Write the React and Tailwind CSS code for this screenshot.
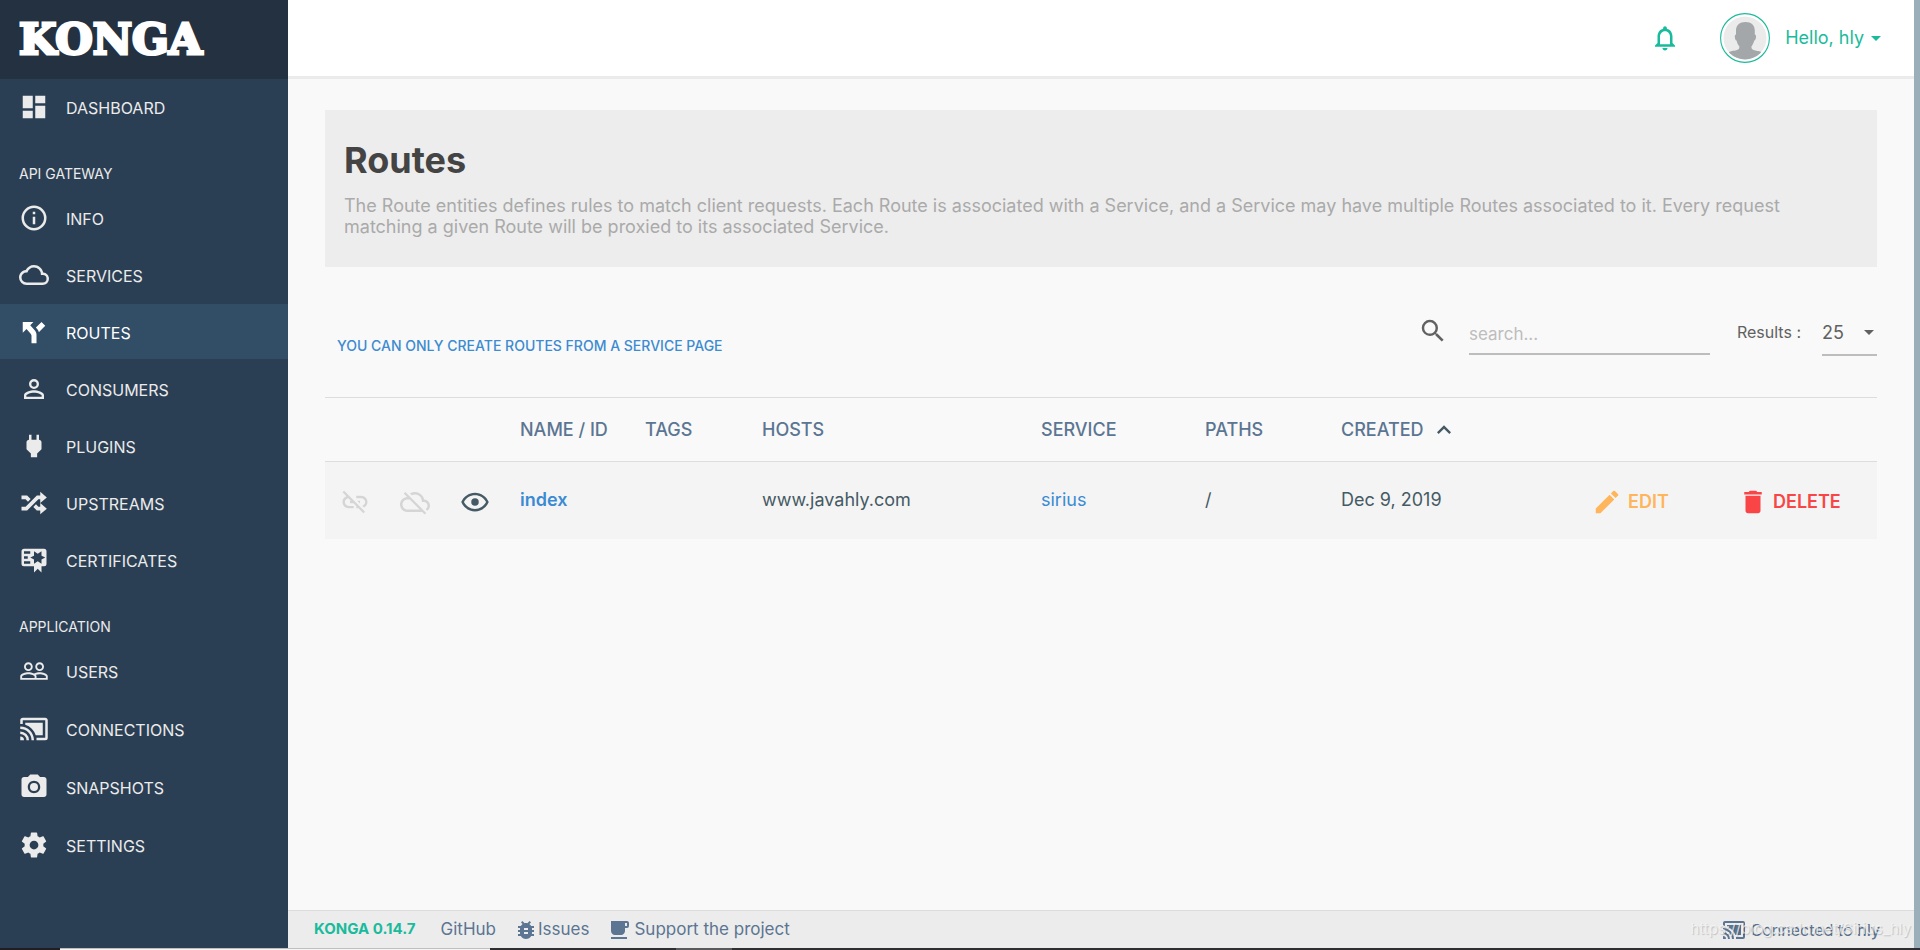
import React from "react";
import {
  MdPeopleOutline,
  MdPhotoCamera,
  MdNotificationsNone,
  MdLinkOff,
  MdCloudOff,
  MdEdit,
  MdDelete,
  MdBugReport,
  MdLocalCafe,
  MdSearch,
  MdKeyboardArrowUp,
  MdArrowDropDown,
} from "react-icons/md";

function Glyph({ d, className = "size-[30px]" }) {
  return (
    <svg viewBox="0 0 24 24" fill="currentColor" className={className} aria-hidden="true">
      <path d={d} />
    </svg>
  );
}

const castPath =
  "M21,3H3C1.89,3 1,3.89 1,5V8H3V5H21V19H14V21H21A2,2 0 0,0 23,19V5C23,3.89 22.1,3 21,3M1,10V12A9,9 0 0,1 10,21H12C12,14.92 7.07,10 1,10M19,7H5V8.63C8.96,9.91 12.09,13.04 13.37,17H19M1,14V16A5,5 0 0,1 6,21H8A7,7 0 0,0 1,14M1,18V21H4A3,3 0 0,0 1,18Z";
const eyePath =
  "M12,9A3,3 0 0,1 15,12A3,3 0 0,1 12,15A3,3 0 0,1 9,12A3,3 0 0,1 12,9M12,4.5C17,4.5 21.27,7.61 23,12C21.27,16.39 17,19.5 12,19.5C7,19.5 2.73,16.39 1,12C2.73,7.61 7,4.5 12,4.5M3.18,12C4.83,15.36 8.24,17.5 12,17.5C15.76,17.5 19.17,15.36 20.82,12C19.17,8.64 15.76,6.5 12,6.5C8.24,6.5 4.83,8.64 3.18,12Z";

const gateway = [
  ["INFO", "M11,9H13V7H11M12,20C7.59,20 4,16.41 4,12C4,7.59 7.59,4 12,4C16.41,4 20,7.59 20,12C20,16.41 16.41,20 12,20M12,2A10,10 0 0,0 2,12A10,10 0 0,0 12,22A10,10 0 0,0 22,12A10,10 0 0,0 12,2M11,17H13V11H11V17Z"],
  ["SERVICES", "M19,18H6A4,4 0 0,1 2,14A4,4 0 0,1 6,10H6.71C7.37,7.69 9.5,6 12,6A5.5,5.5 0 0,1 17.5,11.5V12H19A3,3 0 0,1 22,15A3,3 0 0,1 19,18M19.35,10.03C18.67,6.59 15.64,4 12,4C9.11,4 6.6,5.64 5.35,8.03C2.34,8.36 0,10.9 0,14A6,6 0 0,0 6,20H19A5,5 0 0,0 24,15C24,12.36 21.95,10.22 19.35,10.03Z"],
  ["ROUTES", "M3,4V12.5L6,9.5L9,13C10,14 10,15 10,15V21H14V14C14,14 14,13 13.47,12C12.94,11 12,10 12,10L9,6.58L11.5,4M18,4L13.54,8.47L14,9C14,9 14.93,10 15.47,11C15.68,11.4 15.8,11.79 15.87,12.13L21,7"],
  ["CONSUMERS", "M12,13C9.33,13 4,14.33 4,17V20H20V17C20,14.33 14.67,13 12,13M12,4A4,4 0 0,0 8,8A4,4 0 0,0 12,12A4,4 0 0,0 16,8A4,4 0 0,0 12,4M12,14.9C14.97,14.9 18.1,16.36 18.1,17V18.1H5.9V17C5.9,16.36 9,14.9 12,14.9M12,5.9A2.1,2.1 0 0,1 14.1,8A2.1,2.1 0 0,1 12,10.1A2.1,2.1 0 0,1 9.9,8A2.1,2.1 0 0,1 12,5.9Z"],
  ["PLUGINS", "M16,7V3H14V7H10V3H8V7H8C7,7 6,8 6,9V14.5L9.5,18V21H14.5V18L18,14.5V9C18,8 17,7 16,7Z"],
  ["UPSTREAMS", "M17,3L22.25,7.5L17,12L22.25,16.5L17,21V18H14.26L11.44,15.18L13.56,13.06L15.5,15H17V12L17,9H15.5L6.5,18H2V15H5.26L14.26,6H17V3M2,6H6.5L9.32,8.82L7.2,10.94L5.26,9H2V6Z"],
  ["CERTIFICATES", "M4,3C2.89,3 2,3.89 2,5V15A2,2 0 0,0 4,17H12V22L15,19L18,22V17H20A2,2 0 0,0 22,15V8L22,6V5A2,2 0 0,0 20,3H16V3H4M12,5L15,7L18,5V8.5L21,10L18,11.5V15L15,13L12,15V11.5L9,10L12,8.5V5M4,5H9V7H4V5M4,9H7V11H4V9M4,13H9V15H4V13Z"],
];

function NavItem({ label, active, children }) {
  return (
    <li>
      <a
        href="#"
        aria-current={active ? "page" : undefined}
        className={
          active
            ? "flex h-[55px] items-center gap-[17px] bg-[#324d66] px-[19px] text-white"
            : "flex h-[55px] items-center gap-[17px] px-[19px] text-[#ebebeb]"
        }
      >
        {children}
        <span className="pt-[3px] text-base">{label}</span>
      </a>
    </li>
  );
}

function NavHeading({ children }) {
  return (
    <h2 className="px-[19px] pt-[30px] pb-[6px] text-sm leading-5 text-[#ebebeb]">{children}</h2>
  );
}

function Sidebar() {
  return (
    <aside className="w-[288px] shrink-0 bg-[#2b3f54]">
      <div className="flex h-[79px] items-center bg-[#233140] px-[19px]">
        <a
          href="#"
          className="font-['DejaVu_Serif',serif] text-[43px] leading-none font-bold text-white [-webkit-text-stroke:3px_white]"
        >
          KONGA
        </a>
      </div>
      <nav>
        <ul>
          <NavItem label="DASHBOARD">
            <Glyph d="M13,3V9H21V3M13,21H21V11H13M3,21H11V15H3M3,13H11V3H3V13Z" />
          </NavItem>
        </ul>
        <NavHeading>API GATEWAY</NavHeading>
        <ul className="flex flex-col gap-[2px]">
          {gateway.map(([label, d]) => (
            <NavItem key={label} label={label} active={label === "ROUTES"}>
              <Glyph d={d} />
            </NavItem>
          ))}
        </ul>
        <NavHeading>APPLICATION</NavHeading>
        <ul className="flex flex-col gap-[3px]">
          <NavItem label="USERS">
            <MdPeopleOutline className="size-[30px]" />
          </NavItem>
          <NavItem label="CONNECTIONS">
            <Glyph d={castPath} />
          </NavItem>
          <NavItem label="SNAPSHOTS">
            <MdPhotoCamera className="size-[30px]" />
          </NavItem>
          <NavItem label="SETTINGS">
            <Glyph d="M12,15.5A3.5,3.5 0 0,1 8.5,12A3.5,3.5 0 0,1 12,8.5A3.5,3.5 0 0,1 15.5,12A3.5,3.5 0 0,1 12,15.5M19.43,12.97C19.47,12.65 19.5,12.33 19.5,12C19.5,11.67 19.47,11.34 19.43,11L21.54,9.37C21.73,9.22 21.78,8.95 21.66,8.73L19.66,5.27C19.54,5.05 19.27,4.96 19.05,5.05L16.56,6.05C16.04,5.66 15.5,5.32 14.87,5.07L14.5,2.42C14.46,2.18 14.25,2 14,2H10C9.75,2 9.54,2.18 9.5,2.42L9.13,5.07C8.5,5.32 7.96,5.66 7.44,6.05L4.95,5.05C4.73,4.96 4.46,5.05 4.34,5.27L2.34,8.73C2.21,8.95 2.27,9.22 2.46,9.37L4.57,11C4.53,11.34 4.5,11.67 4.5,12C4.5,12.33 4.53,12.65 4.57,12.97L2.46,14.63C2.27,14.78 2.21,15.05 2.34,15.27L4.34,18.73C4.46,18.95 4.73,19.03 4.95,18.95L7.44,17.94C7.96,18.34 8.5,18.68 9.13,18.93L9.5,21.58C9.54,21.82 9.75,22 10,22H14C14.25,22 14.46,21.82 14.5,21.58L14.87,18.93C15.5,18.67 16.04,18.34 16.56,17.94L19.05,18.95C19.27,19.03 19.54,18.95 19.66,18.73L21.66,15.27C21.78,15.05 21.73,14.78 21.54,14.63L19.43,12.97Z" />
          </NavItem>
        </ul>
      </nav>
    </aside>
  );
}

function Avatar() {
  return (
    <svg viewBox="0 0 50 50" className="size-[50px]" aria-hidden="true">
      <defs>
        <clipPath id="avatar-clip">
          <circle cx="25" cy="25" r="21.5" />
        </clipPath>
      </defs>
      <circle cx="25" cy="25" r="24.4" fill="#fff" stroke="#1abb9c" strokeWidth="1.1" />
      <circle cx="25" cy="25" r="21.5" fill="#ebebeb" />
      <g clipPath="url(#avatar-clip)" fill="#a3a7aa">
        <path d="M25.5 9 C31.5 9 35 12.5 34.8 18 L34.8 21.6 C36.3 21.8 36.3 24 35.6 26 C35.2 27.2 34.6 27.6 34.2 27.6 C33.6 30.5 32.4 32.4 31.4 33.4 L31.6 35.2 C32.4 37.4 36 37.6 38.5 38 C40.6 38.4 42.4 39.4 44 41 L44 50 L6 50 L6 41 C7.8 39.4 9.8 38.4 12 38 C15 37.4 18.4 37.2 19.2 35.2 L19.4 33.4 C18.2 32.2 17 30.2 16.6 27.6 C16 27.6 15.6 27 15.2 26 C14.6 24 14.6 21.8 16 21.6 L16 18 C15.8 12.5 19.5 9 25.5 9 Z" />
      </g>
    </svg>
  );
}

function Header() {
  return (
    <header className="flex h-[79px] items-center justify-end border-b-3 border-[#ebebeb] bg-white pr-[26px] text-[#1abb9c]">
      <button type="button" aria-label="Notifications" className="mr-[40px]">
        <MdNotificationsNone className="size-[30px]" />
      </button>
      <button type="button" className="flex items-center text-lg">
        <Avatar />
        <span className="ml-[15px]">Hello, hly</span>
        <MdArrowDropDown className="size-6" />
      </button>
    </header>
  );
}

function Toolbar() {
  return (
    <div className="flex items-start pt-[45px]">
      <p className="grow pt-[24px] pl-[12px] text-sm leading-5 font-medium text-[#3d8bd1]">
        YOU CAN ONLY CREATE ROUTES FROM A SERVICE PAGE
      </p>
      <label htmlFor="search" aria-label="Search" className="mr-[21px] pt-1 text-[#616161]">
        <MdSearch className="size-[30px]" />
      </label>
      <input
        id="search"
        type="text"
        placeholder="search..."
        className="h-[43px] w-[241px] border-b-2 border-[#bdbdbd] bg-transparent pt-[2px] text-[17px] outline-none placeholder:text-[#bdbdbd]"
      />
      <label htmlFor="results" className="pt-[10px] pr-[21px] pl-[27px] text-base leading-5 text-[#616161]">
        Results :
      </label>
      <div className="relative">
        <select
          id="results"
          defaultValue="25"
          className="h-[44px] w-[55px] appearance-none border-b-2 border-[#bdbdbd] bg-transparent text-lg text-[#616161] outline-none"
        >
          <option>25</option>
          <option>50</option>
          <option>100</option>
        </select>
        <MdArrowDropDown className="pointer-events-none absolute top-[8px] -right-1 size-6 text-[#616161]" />
      </div>
    </div>
  );
}

function RoutesTable() {
  return (
    <table className="mt-[41px] w-full table-fixed border-t border-[#dddddd] text-left text-lg text-[#455a64]">
      <colgroup>
        <col className="w-[60px]" />
        <col className="w-[60px]" />
        <col className="w-[60px]" />
        <col className="w-[125px]" />
        <col className="w-[117px]" />
        <col />
        <col className="w-[164px]" />
        <col className="w-[136px]" />
        <col className="w-[251px]" />
        <col className="w-[146px]" />
        <col className="w-[154px]" />
      </colgroup>
      <thead>
        <tr className="h-[64px] border-b border-[#dddddd] text-[#5b7592]">
          <th colSpan={3} />
          <th className="px-[15px] font-medium whitespace-nowrap">NAME / ID</th>
          <th className="px-[15px] font-medium">TAGS</th>
          <th className="px-[15px] font-medium">HOSTS</th>
          <th className="px-[15px] font-medium">SERVICE</th>
          <th className="px-[15px] font-medium">PATHS</th>
          <th className="px-[15px] font-medium">
            <button type="button" className="flex items-center gap-[6px]">
              CREATED
              <MdKeyboardArrowUp className="size-7 text-[#455a64]" />
            </button>
          </th>
          <th />
          <th />
        </tr>
      </thead>
      <tbody>
        <tr className="h-[77px] bg-[#f4f4f4]">
          <td className="px-[15px] pt-1 text-[#d5d5d5]">
            <MdLinkOff className="size-[30px]" />
          </td>
          <td className="px-[15px] pt-1 text-[#d5d5d5]">
            <MdCloudOff className="size-[30px]" />
          </td>
          <td className="px-[15px] pt-1">
            <button type="button" aria-label="View raw" className="block">
              <Glyph d={eyePath} />
            </button>
          </td>
          <td className="px-[15px]">
            <a href="#" className="font-semibold text-[#3a8bd3]">index</a>
          </td>
          <td />
          <td className="px-[15px]">www.javahly.com</td>
          <td className="px-[15px]">
            <a href="#" className="text-[#3a8bd3]">sirius</a>
          </td>
          <td className="px-[15px]">/</td>
          <td className="px-[15px]">Dec 9, 2019</td>
          <td className="px-[15px] pt-[3px]">
            <button type="button" className="flex items-center gap-[6px] font-semibold text-[#ffb55c]">
              <MdEdit className="size-[30px]" />
              EDIT
            </button>
          </td>
          <td className="px-[15px] pt-[3px]">
            <button type="button" className="flex items-center gap-[5px] font-semibold text-[#fa4547]">
              <MdDelete className="size-[30px]" />
              DELETE
            </button>
          </td>
        </tr>
      </tbody>
    </table>
  );
}

function Footer() {
  return (
    <footer className="relative flex h-[38px] items-center border-t border-[#dcdcdc] bg-[#ececec] px-[26px] text-[17px] text-[#5b7592]">
      <a href="#" className="text-[15px] font-bold text-[#1abb9c]">KONGA 0.14.7</a>
      <a href="#" className="ml-[25px]">GitHub</a>
      <a href="#" className="ml-[18px] flex items-center">
        <MdBugReport className="size-6" />
        Issues
      </a>
      <a href="#" className="ml-[18px] flex items-center gap-[3px]">
        <MdLocalCafe className="size-6" />
        Support the project
      </a>
      <span className="mr-[8px] ml-auto flex items-center gap-[5px] text-base">
        <Glyph d={castPath} className="size-6" />
        <span>
          Connected to <span className="font-medium">hly</span>
        </span>
      </span>
      <span className="pointer-events-none absolute right-[3px] text-[15px] text-[#f6f6f6]/80 [text-shadow:1px_1px_1px_rgb(0_0_0/0.18)]">
        https://blog.csdn.net/Sirius_hly
      </span>
    </footer>
  );
}

export default function App() {
  return (
    <div className="flex min-h-screen flex-col font-['Inter',sans-serif]">
      <div className="flex grow border-r-6 border-[#9aafb9] bg-[#f9f9f9]">
        <Sidebar />
        <div className="flex min-w-0 grow flex-col">
          <Header />
          <main className="grow px-[37px] pt-[31px]">
            <section className="bg-[#ededed] px-[19px] pt-[27px] pb-[30px]">
              <h1 className="text-4xl leading-[46px] font-bold text-[#444444]">Routes</h1>
              <p className="pt-3 text-lg leading-[21px] text-[#aaaaaa]">
                The Route entities defines rules to match client requests. Each Route is associated with a
                Service, and a Service may have multiple Routes associated to it. Every request matching a
                given Route will be proxied to its associated Service.
              </p>
            </section>
            <Toolbar />
            <RoutesTable />
          </main>
          <Footer />
        </div>
      </div>
      <div className="flex h-[2px] bg-[#2f2f33]">
        <div className="w-[60px] bg-[#1f1f22]" />
        <div className="w-[430px] border-t border-[#bfbfbf] bg-[#f5f5f5]" />
        <div className="ml-[186px] w-[56px] bg-[#5a5a5e]" />
      </div>
    </div>
  );
}
